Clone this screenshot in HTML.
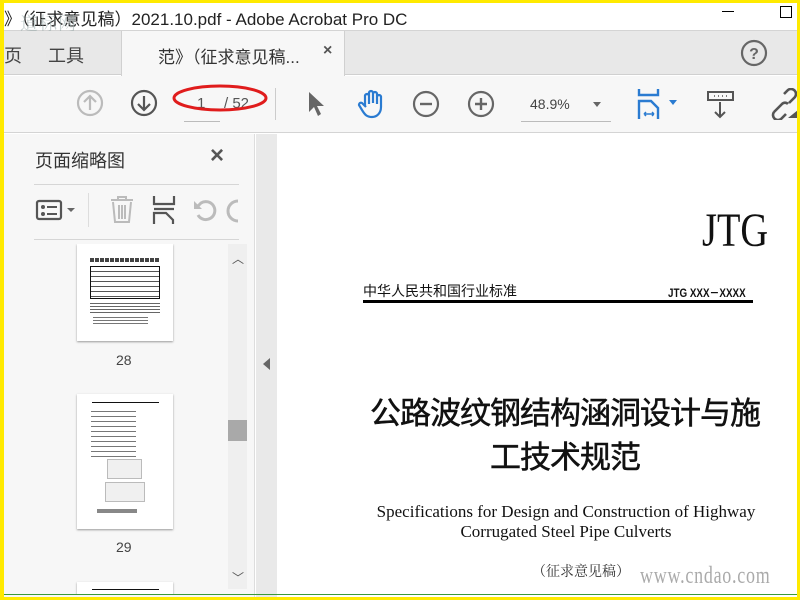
<!DOCTYPE html>
<html><head><meta charset="utf-8"><style>
*{margin:0;padding:0;box-sizing:border-box}
body{width:800px;height:600px;position:relative;overflow:hidden;background:#fff;font-family:"Liberation Sans","Noto Sans CJK SC",sans-serif}
.a{position:absolute}
.cjk{font-family:"Liberation Sans","Noto Sans CJK SC",sans-serif}
.serif{font-family:"Liberation Serif","Noto Serif CJK SC",serif}
</style></head><body>
<div class="a" style="left:0;top:0;width:800px;height:31px;background:#fff;border-bottom:1px solid #d4d4d4"></div>
<div class="a cjk" style="left:4px;top:5px;font-size:17px;color:#222;white-space:nowrap">》（征求意见稿）2021.10.pdf - Adobe Acrobat Pro DC</div>
<div class="a serif" style="left:20px;top:10px;font-size:18px;color:#9aa;opacity:.55;letter-spacing:1px">道标网</div>
<div class="a" style="left:722px;top:11px;width:12px;height:1px;background:#000"></div>
<div class="a" style="left:780px;top:6px;width:12px;height:12px;border:1px solid #000"></div>
<div class="a" style="left:0;top:31px;width:800px;height:44px;background:#e8e8e8;border-bottom:1px solid #d0d0d0"></div>
<div class="a cjk" style="left:4px;top:42px;font-size:18px;color:#444">页</div>
<div class="a cjk" style="left:48px;top:42px;font-size:18px;color:#444">工具</div>
<div class="a" style="left:121px;top:31px;width:224px;height:45px;background:#f7f7f7;border-left:1px solid #d0d0d0;border-right:1px solid #d0d0d0"></div>
<div class="a cjk" style="left:158px;top:43px;font-size:17px;color:#333;white-space:nowrap">范》（征求意见稿...</div>
<div class="a" style="left:323px;top:42px;font-size:16px;color:#555;font-weight:bold">×</div>
<svg class="a" style="left:740px;top:39px" width="28" height="28"><circle cx="14" cy="14" r="12" fill="none" stroke="#666" stroke-width="2.2"/><text x="14" y="20" text-anchor="middle" font-size="16" font-weight="bold" fill="#666" font-family="Liberation Sans">?</text></svg>
<div class="a" style="left:0;top:76px;width:800px;height:57px;background:#f7f7f7;border-bottom:1px solid #d4d4d4"></div>
<svg class="a" style="left:76px;top:89px" width="28" height="28"><circle cx="14" cy="14" r="12" fill="none" stroke="#bbb" stroke-width="2.2"/><path d="M14 21V8M8 13l6-6 6 6" fill="none" stroke="#bbb" stroke-width="2.2"/></svg>
<svg class="a" style="left:130px;top:89px" width="28" height="28"><circle cx="14" cy="14" r="12" fill="none" stroke="#555" stroke-width="2.2"/><path d="M14 7v13M8 15l6 6 6-6" fill="none" stroke="#555" stroke-width="2.2"/></svg>
<div class="a" style="left:184px;top:121px;width:36px;height:1px;background:#bbb"></div>
<div class="a" style="left:197px;top:95px;font-size:15px;color:#555">1</div>
<div class="a" style="left:224px;top:95px;font-size:15px;color:#555">/ 52</div>
<svg class="a" style="left:170px;top:78px" width="100" height="40"><ellipse cx="50" cy="20" rx="46" ry="12" fill="none" stroke="#e01c1c" stroke-width="3"/></svg>
<div class="a" style="left:275px;top:88px;width:1px;height:32px;background:#ccc"></div>
<svg class="a" style="left:306px;top:90px" width="22" height="28"><path d="M3 2L3 22 8 17 12 26 15 24 11 16 18 16Z" fill="#666"/></svg>
<svg class="a" style="left:356px;top:88px" width="32" height="32"><path d="M9 18V8a2 2 0 0 1 4 0v8M13 15V5a2 2 0 0 1 4 0v10M17 15V6a2 2 0 0 1 4 0v10M21 16V9a2 2 0 0 1 4 0v10c0 6-4 10-9 10s-7-2-10-7l-3-5a2 2 0 0 1 3-2l4 4" fill="none" stroke="#2a7bd1" stroke-width="2.2" stroke-linejoin="round"/></svg>
<svg class="a" style="left:412px;top:90px" width="28" height="28"><circle cx="14" cy="14" r="12" fill="none" stroke="#666" stroke-width="2.2"/><path d="M8 14h12" stroke="#666" stroke-width="2.4"/></svg>
<svg class="a" style="left:467px;top:90px" width="28" height="28"><circle cx="14" cy="14" r="12" fill="none" stroke="#666" stroke-width="2.2"/><path d="M8 14h12M14 8v12" stroke="#666" stroke-width="2.4"/></svg>
<div class="a" style="left:530px;top:96px;font-size:14px;color:#444">48.9%</div>
<div class="a" style="left:593px;top:102px;border-left:4px solid transparent;border-right:4px solid transparent;border-top:5px solid #666"></div>
<div class="a" style="left:521px;top:121px;width:90px;height:1px;background:#bbb"></div>
<svg class="a" style="left:636px;top:88px" width="46" height="32"><path d="M3 1v6h19V1" fill="none" stroke="#2a7bd1" stroke-width="2.4"/><path d="M3 31V13h12l7 7v11" fill="none" stroke="#2a7bd1" stroke-width="2.4"/><path d="M8 26h10M8 26l2-2M8 26l2 2M18 26l-2-2M18 26l-2 2" stroke="#2a7bd1" stroke-width="1.5"/><path d="M33 12h8l-4 5z" fill="#2a7bd1"/></svg>
<svg class="a" style="left:706px;top:90px" width="30" height="30"><rect x="2" y="2" width="25" height="8" fill="none" stroke="#555" stroke-width="2"/><path d="M8 6h1M12 6h1M16 6h1M20 6h1" stroke="#555" stroke-width="1.6"/><path d="M14 12v15M9 22l5 5 5-5" fill="none" stroke="#555" stroke-width="2"/></svg>
<svg class="a" style="left:770px;top:88px" width="30" height="32"><path d="M4 24l8-8a4 4 0 0 1 6 0M14 6l4-4a5 5 0 0 1 7 7l-6 6M4 24a5 5 0 0 0 7 7l5-5" fill="none" stroke="#555" stroke-width="2.6"/><path d="M18 30l10-8v8z" fill="#555"/></svg>
<div class="a" style="left:0;top:134px;width:255px;height:466px;background:#f7f7f7;border-right:1px solid #ddd"></div>
<div class="a cjk" style="left:35px;top:147px;font-size:18px;color:#333">页面缩略图</div>
<div class="a" style="left:210px;top:142px;font-size:24px;color:#555;font-weight:bold">×</div>
<div class="a" style="left:34px;top:184px;width:205px;height:1px;background:#d6d6d6"></div>
<svg class="a" style="left:35px;top:198px" width="45" height="26"><rect x="2" y="3" width="24" height="18" rx="2" fill="none" stroke="#555" stroke-width="2.2"/><circle cx="8" cy="9" r="2" fill="#555"/><circle cx="8" cy="16" r="2" fill="#555"/><path d="M12 9h10M12 16h10" stroke="#555" stroke-width="2"/><path d="M32 10h8l-4 4z" fill="#666"/></svg>
<div class="a" style="left:88px;top:193px;width:1px;height:34px;background:#ddd"></div>
<svg class="a" style="left:108px;top:195px" width="28" height="30"><path d="M3 5h22M10 5V2h8v3M5 7l2 20h14l2-20M11 10v14M14 10v14M17 10v14" fill="none" stroke="#bbb" stroke-width="2"/></svg>
<svg class="a" style="left:152px;top:196px" width="24" height="28"><path d="M2 0v8h20V0M2 13h20" fill="none" stroke="#555" stroke-width="2.2"/><path d="M2 28V17h12l7 7v4" fill="none" stroke="#555" stroke-width="2.2"/></svg>
<svg class="a" style="left:192px;top:197px" width="48" height="28"><path d="M6 18a9 9 0 1 0 3-12l-3 3" fill="none" stroke="#bbb" stroke-width="3"/><path d="M2 4v8h8z" fill="#bbb"/><path d="M46 4a10 10 0 0 0 0 20" fill="none" stroke="#bbb" stroke-width="3"/></svg>
<div class="a" style="left:34px;top:239px;width:205px;height:1px;background:#d6d6d6"></div>
<div class="a" style="left:4px;top:244px;width:224px;height:350px;overflow:hidden">
 <div class="a" style="left:73px;top:0;width:96px;height:97px;background:#fff;box-shadow:0 1px 2px #999">
  <div class="a" style="left:13px;top:14px;width:70px;height:4px;background:repeating-linear-gradient(90deg,#444 0 4px,#fff 4px 5px)"></div>
  <div class="a" style="left:13px;top:22px;width:70px;height:33px;border:1px solid #111;background:repeating-linear-gradient(180deg,#fff 0 4px,#555 4px 5px)"></div>
  <div class="a" style="left:13px;top:59px;width:70px;height:10px;background:repeating-linear-gradient(180deg,#666 0 1px,#fff 1px 3px)"></div>
  <div class="a" style="left:16px;top:73px;width:55px;height:8px;background:repeating-linear-gradient(180deg,#777 0 1px,#fff 1px 3px)"></div>
 </div>
 <div class="a" style="left:112px;top:108px;font-size:14px;color:#444">28</div>
 <div class="a" style="left:73px;top:150px;width:96px;height:135px;background:#fff;box-shadow:0 1px 2px #999">
  <div class="a" style="left:15px;top:7px;width:67px;height:2px;border-bottom:1px solid #111"></div>
  <div class="a" style="left:14px;top:17px;width:45px;height:50px;background:repeating-linear-gradient(180deg,#777 0 1px,#fff 1px 5px)"></div>
  <div class="a" style="left:30px;top:65px;width:35px;height:20px;border:1px solid #bbb;background:#f0f0f0"></div>
  <div class="a" style="left:28px;top:88px;width:40px;height:20px;border:1px solid #bbb;background:#f0f0f0"></div>
  <div class="a" style="left:20px;top:115px;width:40px;height:4px;background:#888"></div>
 </div>
 <div class="a" style="left:112px;top:295px;font-size:14px;color:#444">29</div>
 <div class="a" style="left:73px;top:338px;width:96px;height:20px;background:#fff;box-shadow:0 1px 2px #999"><div class="a" style="left:15px;top:6px;width:67px;height:2px;border-bottom:1px solid #111"></div></div>
</div>
<div class="a" style="left:228px;top:244px;width:19px;height:345px;background:#efefef"></div>
<div class="a" style="left:232px;top:250px;font-size:12px;color:#555">︿</div>
<div class="a" style="left:228px;top:420px;width:19px;height:21px;background:#a9a9a9"></div>
<div class="a" style="left:232px;top:569px;font-size:12px;color:#555">﹀</div>
<div class="a" style="left:256px;top:134px;width:21px;height:466px;background:#e9e9e9"></div>
<div class="a" style="left:263px;top:358px;border-top:6px solid transparent;border-bottom:6px solid transparent;border-right:7px solid #666"></div>
<div class="a" style="left:277px;top:134px;width:520px;height:466px;background:#fff"></div>
<div class="a serif" style="left:702px;top:207px;font-size:48px;line-height:48px;color:#111;transform:scaleX(.8);transform-origin:left">JTG</div>
<div class="a cjk" style="left:363px;top:281px;font-size:14px;color:#111">中华人民共和国行业标准</div>
<div class="a" style="left:668px;top:284px;font-size:12px;color:#111;font-weight:bold;transform:scaleX(.82);transform-origin:left;white-space:nowrap">JTG XXX－XXXX</div>
<div class="a" style="left:363px;top:300px;width:390px;height:3px;background:#000"></div>
<div class="a cjk" style="left:355px;top:392px;width:420px;text-align:center;font-size:31px;color:#111;line-height:44px;letter-spacing:-1px;-webkit-text-stroke:.5px #111">公路波纹钢结构涵洞设计与施<br>工技术规范</div>
<div class="a serif" style="left:340px;top:502px;width:452px;text-align:center;font-size:17px;color:#111;line-height:20px">Specifications for Design and Construction of Highway<br>Corrugated Steel Pipe Culverts</div>
<div class="a serif" style="left:532px;top:561px;font-size:14px;color:#333">（征求意见稿）</div>
<div class="a serif" style="left:640px;top:564px;font-size:24px;line-height:24px;color:#aaa;transform:scaleX(.75);transform-origin:left;letter-spacing:1px">www.cndao.com</div>
<div class="a" style="left:0;top:594px;width:800px;height:1px;background:#3a9a3a"></div>
<div class="a" style="left:0;top:0;width:800px;height:600px;border:3px solid #ffea00;border-left-width:4px"></div>
</body></html>
